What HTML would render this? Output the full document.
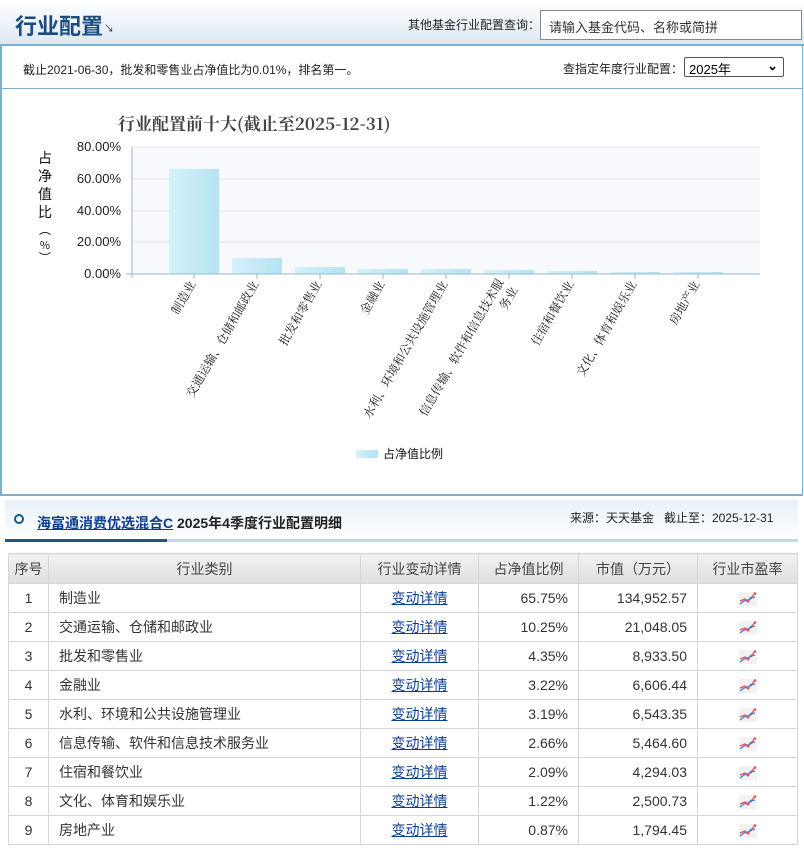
<!DOCTYPE html>
<html><head><meta charset="utf-8"><style>
*{box-sizing:border-box;margin:0;padding:0}
body{width:804px;height:852px;background:#fff;font-family:"Liberation Sans","Noto Sans CJK SC",sans-serif;font-size:13px;color:#333;position:relative;overflow:hidden}
.abs{position:absolute}
.hdr{left:0;top:0;width:804px;height:46px;background:linear-gradient(#fff,#dde8f3);border-bottom:2px solid #7fb0cc}
.frame{left:0;top:46px;width:803px;height:450px;border-left:2px solid #7fb0cc;border-right:1px solid #7fb0cc;border-bottom:2px solid #7fb0cc}
table{border-collapse:collapse;position:absolute;left:8px;top:553px;width:790px}
td,th{border:1px solid #d6d6d6;height:29px;font-size:14px;font-weight:normal}
th{background:linear-gradient(#f2f2f2,#dedede);color:#444;height:30px}
td.c{text-align:center}td.r{text-align:right;padding-right:10px}
td a{color:#0b3d91;text-decoration:underline}
td svg{vertical-align:middle}
</style></head><body>
<div class="abs hdr"></div>
<div class="abs" style="left:15px;top:9px;font-size:22px;font-weight:bold;color:#1a4c80">行业配置</div>
<div class="abs" style="left:104px;top:20px;font-size:10px;color:#333">↘</div>
<div class="abs" style="left:408px;top:16px;font-size:12px;color:#222;white-space:nowrap">其他基金行业配置查询：</div>
<div class="abs" style="left:540px;top:10px;width:262px;height:30px;border:1px solid #888;background:#fff;padding:6px 8px;font-size:13px;color:#333">请输入基金代码、名称或简拼</div>
<div class="abs frame"></div>
<div class="abs" style="left:2px;top:88px;width:800px;height:1px;background:#7fb0cc"></div>
<div class="abs" style="left:23px;top:61px;font-size:12px;color:#222">截止2021-06-30，批发和零售业占净值比为0.01%，排名第一。</div>
<div class="abs" style="left:563px;top:60px;font-size:12px;color:#222;white-space:nowrap">查指定年度行业配置：</div>
<div class="abs" style="left:684px;top:57px;width:100px;height:20px;border:1px solid #555;border-radius:2px;padding:1px 4px;font-size:13px;color:#000">2025年<span style="position:absolute;right:5px;top:0;font-weight:bold">⌄</span></div>
<svg class="abs" style="left:0;top:90px" width="804" height="400" font-family="Noto Serif CJK SC,serif">
<defs><linearGradient id="g" x1="0" x2="1"><stop offset="0" stop-color="#d4f1fa"/><stop offset="1" stop-color="#b5e3f2"/></linearGradient></defs>
<text x="118" y="40" font-size="17" font-weight="bold" fill="#444" font-family="Noto Serif CJK SC,serif">行业配置前十大(截止至2025-12-31)</text>
<rect x="132" y="57" width="628" height="127" fill="#f7f9fc"/>
<g stroke="#e2e8f0"><line x1="132" y1="57" x2="760" y2="57"/><line x1="132" y1="89" x2="760" y2="89"/><line x1="132" y1="121" x2="760" y2="121"/><line x1="132" y1="152" x2="760" y2="152"/></g>
<g font-size="13" fill="#222" text-anchor="end" font-family="Liberation Sans,sans-serif"><text x="121" y="61">80.00%</text><text x="121" y="93">60.00%</text><text x="121" y="125">40.00%</text><text x="121" y="156">20.00%</text><text x="121" y="188">0.00%</text></g>
<g font-size="14" fill="#111" text-anchor="middle" font-family="Noto Sans CJK SC,sans-serif"><text x="45" y="73">占</text><text x="45" y="91">净</text><text x="45" y="109">值</text><text x="45" y="127">比</text><text x="45" y="144" font-size="12">︵</text><text x="45" y="159" font-size="11">%</text><text x="45" y="172" font-size="12">︶</text></g>
<g fill="url(#g)"><rect x="169" y="79" width="50" height="105"/><rect x="232" y="168" width="50" height="16"/><rect x="295" y="177" width="50" height="7"/><rect x="358" y="179" width="50" height="5"/><rect x="421" y="179" width="50" height="5"/><rect x="484" y="180" width="50" height="4"/><rect x="547" y="181" width="50" height="3"/><rect x="610" y="182" width="50" height="2"/><rect x="673" y="182" width="50" height="2"/></g>
<line x1="132" y1="57" x2="132" y2="188" stroke="#9ab8cc"/>
<line x1="126" y1="184" x2="760" y2="184" stroke="#9ab8cc"/>
<g stroke="#9ab8cc"><line x1="194" y1="184" x2="194" y2="189"/><line x1="257" y1="184" x2="257" y2="189"/><line x1="320" y1="184" x2="320" y2="189"/><line x1="383" y1="184" x2="383" y2="189"/><line x1="446" y1="184" x2="446" y2="189"/><line x1="509" y1="184" x2="509" y2="189"/><line x1="572" y1="184" x2="572" y2="189"/><line x1="635" y1="184" x2="635" y2="189"/><line x1="698" y1="184" x2="698" y2="189"/></g>
<g font-size="12" fill="#222" text-anchor="end">
<text transform="translate(196,194) rotate(-60)">制造业</text>
<text transform="translate(259,194) rotate(-60)">交通运输、仓储和邮政业</text>
<text transform="translate(322,194) rotate(-60)">批发和零售业</text>
<text transform="translate(385,194) rotate(-60)">金融业</text>
<text transform="translate(448,194) rotate(-60)">水利、环境和公共设施管理业</text>
<text transform="translate(504,192) rotate(-60)">信息传输、软件和信息技术服</text>
<text transform="translate(518,200) rotate(-60)">务业</text>
<text transform="translate(574,194) rotate(-60)">住宿和餐饮业</text>
<text transform="translate(637,194) rotate(-60)">文化、体育和娱乐业</text>
<text transform="translate(700,194) rotate(-60)">房地产业</text>
</g>
<rect x="356" y="360" width="22" height="8" fill="url(#g)"/>
<text x="383" y="368" font-size="12" fill="#111" font-family="Noto Sans CJK SC,sans-serif">占净值比例</text>
</svg>
<div class="abs" style="left:5px;top:500px;width:793px;height:42px;background:linear-gradient(#e8f0f8,#fff);border-bottom:3px solid #c5d9ea"></div>
<div class="abs" style="left:5px;top:539px;width:162px;height:3px;background:#1a5a86"></div>
<div class="abs" style="left:14px;top:514px;width:10px;height:10px;border:2px solid #1a5a86;border-radius:50%"></div>
<div class="abs" style="left:37px;top:513px;font-size:14px;font-weight:bold"><a style="color:#0b3d91;text-decoration:underline">海富通消费优选混合C</a> <span style="color:#222">2025年4季度行业配置明细</span></div>
<div class="abs" style="left:570px;top:509px;font-size:12px;color:#222">来源：天天基金 &nbsp; 截止至：2025-12-31</div>
<svg width="0" height="0" style="position:absolute"><defs><symbol id="ic" viewBox="0 0 18 14"><rect width="18" height="14" fill="#f2f2f2"/><polyline points="1,9 6,7 9,9 13,5 16,1" fill="none" stroke="#e8505b" stroke-width="1.3"/><polyline points="1,12 5,9 9,8 12,6 16,5" fill="none" stroke="#4a7fc8" stroke-width="1.3"/><circle cx="9" cy="9" r="1.5" fill="#e8505b"/><circle cx="12" cy="6" r="1.3" fill="#4a7fc8"/><circle cx="16" cy="1.5" r="1.3" fill="#e8505b"/></symbol></defs></svg>
<table>
<tr><th style="width:40px">序号</th><th style="width:312px">行业类别</th><th style="width:118px">行业变动详情</th><th style="width:100px">占净值比例</th><th style="width:119px">市值（万元）</th><th>行业市盈率</th></tr>
<tr><td class="c">1</td><td style="padding-left:10px">制造业</td><td class="c"><a>变动详情</a></td><td class="r">65.75%</td><td class="r">134,952.57</td><td class="c"><svg width="18" height="14"><use href="#ic"/></svg></td></tr>
<tr><td class="c">2</td><td style="padding-left:10px">交通运输、仓储和邮政业</td><td class="c"><a>变动详情</a></td><td class="r">10.25%</td><td class="r">21,048.05</td><td class="c"><svg width="18" height="14"><use href="#ic"/></svg></td></tr>
<tr><td class="c">3</td><td style="padding-left:10px">批发和零售业</td><td class="c"><a>变动详情</a></td><td class="r">4.35%</td><td class="r">8,933.50</td><td class="c"><svg width="18" height="14"><use href="#ic"/></svg></td></tr>
<tr><td class="c">4</td><td style="padding-left:10px">金融业</td><td class="c"><a>变动详情</a></td><td class="r">3.22%</td><td class="r">6,606.44</td><td class="c"><svg width="18" height="14"><use href="#ic"/></svg></td></tr>
<tr><td class="c">5</td><td style="padding-left:10px">水利、环境和公共设施管理业</td><td class="c"><a>变动详情</a></td><td class="r">3.19%</td><td class="r">6,543.35</td><td class="c"><svg width="18" height="14"><use href="#ic"/></svg></td></tr>
<tr><td class="c">6</td><td style="padding-left:10px">信息传输、软件和信息技术服务业</td><td class="c"><a>变动详情</a></td><td class="r">2.66%</td><td class="r">5,464.60</td><td class="c"><svg width="18" height="14"><use href="#ic"/></svg></td></tr>
<tr><td class="c">7</td><td style="padding-left:10px">住宿和餐饮业</td><td class="c"><a>变动详情</a></td><td class="r">2.09%</td><td class="r">4,294.03</td><td class="c"><svg width="18" height="14"><use href="#ic"/></svg></td></tr>
<tr><td class="c">8</td><td style="padding-left:10px">文化、体育和娱乐业</td><td class="c"><a>变动详情</a></td><td class="r">1.22%</td><td class="r">2,500.73</td><td class="c"><svg width="18" height="14"><use href="#ic"/></svg></td></tr>
<tr><td class="c">9</td><td style="padding-left:10px">房地产业</td><td class="c"><a>变动详情</a></td><td class="r">0.87%</td><td class="r">1,794.45</td><td class="c"><svg width="18" height="14"><use href="#ic"/></svg></td></tr>
</table>
</body></html>
